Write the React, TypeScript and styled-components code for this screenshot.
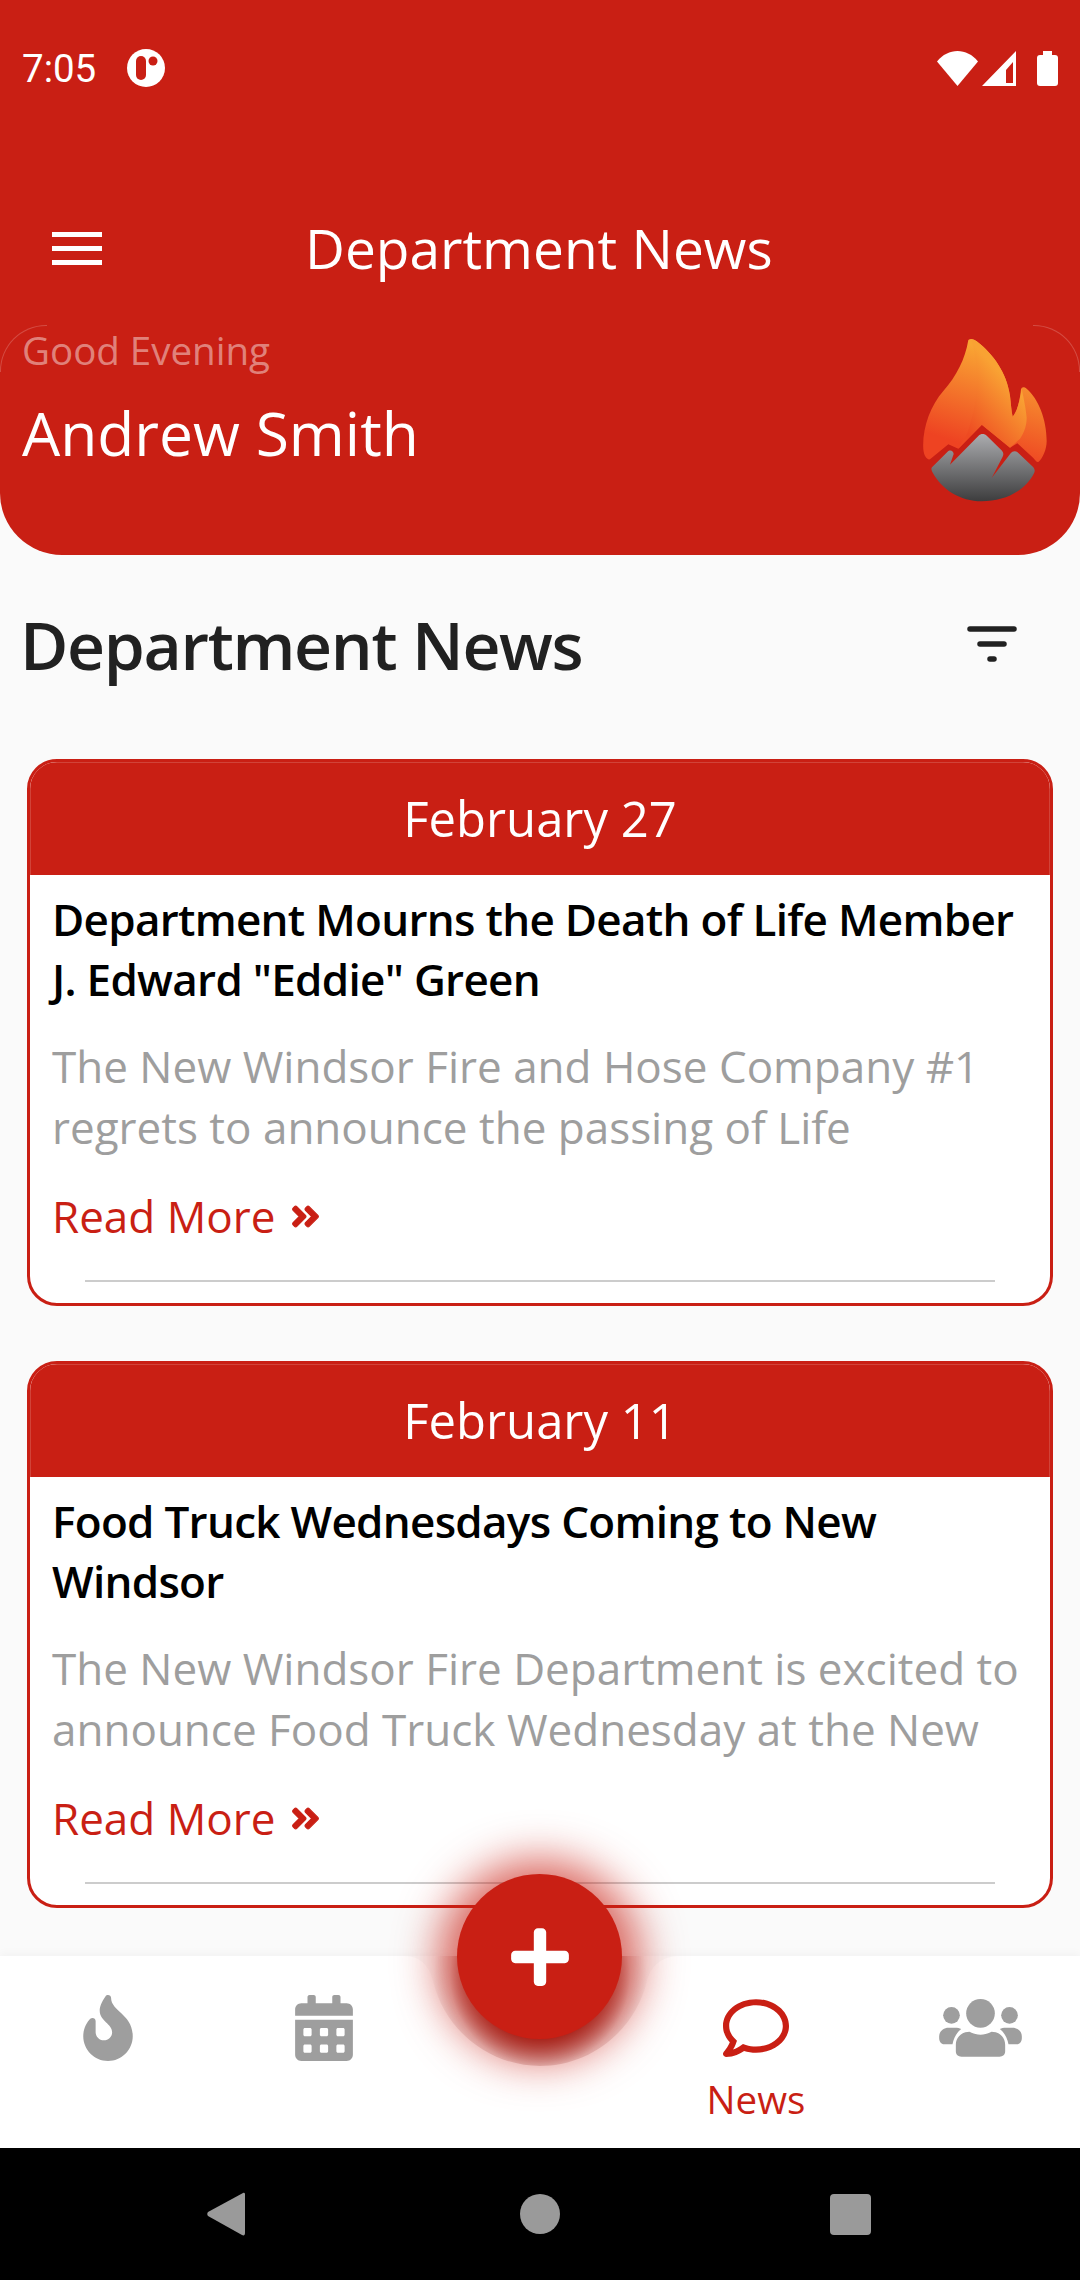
import type { FC } from 'react'
import styled, { createGlobalStyle } from 'styled-components'
import { FaAngleDoubleRight, FaCalendarAlt, FaFire, FaPlus, FaRegComment } from 'react-icons/fa'

const RED = '#c91f14'

const news = [
	{
		date: 'February 27',
		title: 'Department Mourns the Death of Life Member J. Edward "Eddie" Green',
		text: 'The New Windsor Fire and Hose Company #1 regrets to announce the passing of Life',
	},
	{
		date: 'February 11',
		title: 'Food Truck Wednesdays Coming to New Windsor',
		text: 'The New Windsor Fire Department is excited to announce Food Truck Wednesday at the New',
	},
]

const StatusIcons: FC = () => (
	<StatusRight>
		<svg width="41" height="35" viewBox="0 0 41 35">
			<path d="M0 10.5 C11 -3.500 30 -3.500 41 10.500 L20.500 35 Z" fill="#fff" />
		</svg>
		<svg width="35" height="35" viewBox="0 0 35 35">
			<path fillRule="evenodd" d="M34 0 V35 H0 Z M31 11 L24 19 V32 H31 Z" fill="#fff" />
		</svg>
		<Battery />
	</StatusRight>
)

const FireLogo: FC = () => (
	<svg width="130" height="170" viewBox="210 80 390 510">
		<defs>
			<linearGradient id="flameA" x1="0.55" y1="0.1" x2="0.3" y2="0.85">
				<stop offset="0" stopColor="#f9a533" />
				<stop offset="1" stopColor="#ee4322" />
			</linearGradient>
			<linearGradient id="flameB" x1="0.6" y1="0.3" x2="0.2" y2="0.9">
				<stop offset="0" stopColor="#f9a233" />
				<stop offset="1" stopColor="#ee4a22" />
			</linearGradient>
			<linearGradient id="rock" x1="0" y1="0" x2="0" y2="1">
				<stop offset="0" stopColor="#abacaf" />
				<stop offset="1" stopColor="#3d3d3e" />
			</linearGradient>
		</defs>
		<path
			d="M355 92 C362 86 372 90 380 96 C430 135 470 190 480 260 C483 285 484 305 488 322 C503 305 510 270 513 240 C515 232 522 232 530 238 C565 268 590 330 590 395 C590 420 578 448 565 458 C560 460 556 452 550 446 L502 402 L480 415 L396 346 L325 418 L295 405 L240 450 C230 452 222 440 220 420 C216 360 240 290 280 245 C320 200 345 150 355 92 Z"
			fill="url(#flameA)"
		/>
		<path
			d="M362 90 C375 120 382 170 380 230 C378 290 365 330 352 372 L325 418 L395 346 L480 415 L510 388 C525 365 530 345 530 325 C528 300 520 260 515 238 C510 270 503 305 488 322 C484 305 483 285 480 260 C470 190 430 135 380 96 C374 92 368 89 362 90 Z"
			fill="url(#flameB)"
		/>
		<path
			d="M246 474 L292 428 C300 420 310 424 311 434 L300 466 L385 380 C393 372 403 372 411 380 L456 424 C461 430 461 436 458 442 L425 506 L482 432 C488 424 498 424 505 431 L550 474 C555 480 555 486 552 492 C525 545 465 576 395 576 C330 576 275 540 247 488 C244 482 243 478 246 474 Z"
			fill="url(#rock)"
		/>
	</svg>
)

const FilterIcon: FC = () => (
	<svg width="50" height="36" viewBox="0 0 50 36">
		<g stroke="#212121" strokeWidth="5.500" strokeLinecap="round">
			<line x1="3" y1="3" x2="47" y2="3" />
			<line x1="13" y1="18" x2="37" y2="18" />
			<line x1="23" y1="33" x2="27" y2="33" />
		</g>
	</svg>
)

const UsersIcon: FC = () => (
	<UsersSvg width="83" height="58" viewBox="777 88 248 174">
		<g fill="currentColor">
			<circle cx="901" cy="131" r="43" />
			<circle cx="814" cy="137" r="25" />
			<circle cx="988" cy="137" r="25" />
			<path d="M827 245 V225 C827 200 848 186 868 186 C880 192 890 195 901 195 C912 195 922 192 934 186 C955 186 975 200 975 225 V245 C975 255 968 261 958 261 H844 C834 261 827 255 827 245 Z" />
			<path d="M777 205 V200 C777 185 790 174 805 174 H825 C832 174 838 175 843 178 C830 188 820 205 817 224 H792 C783 224 777 216 777 205 Z" />
			<path d="M1025 205 V200 C1025 185 1012 174 997 174 H977 C970 174 964 175 959 178 C972 188 982 205 985 224 H1010 C1019 224 1025 216 1025 205 Z" />
		</g>
	</UsersSvg>
)

const App: FC = () => {
	return (
		<Page>
			<GlobalStyle />
			<Header>
				<StatusBar>
					<Clock>7:05</Clock>
					<svg width="38" height="38" viewBox="0 0 38 38">
						<circle cx="19" cy="19" r="19" fill="#fff" />
						<rect x="9" y="7" width="10" height="24" rx="5" fill={RED} />
						<circle cx="26" cy="12" r="4.500" fill={RED} />
					</svg>
					<StatusIcons />
				</StatusBar>
				<Toolbar>
					<Burger>
						<span />
						<span />
						<span />
					</Burger>
					<ToolbarTitle>Department News</ToolbarTitle>
				</Toolbar>
				<Greeting>
					<div>
						<Hello>Good Evening</Hello>
						<UserName>Andrew Smith</UserName>
					</div>
					<LogoSlot>
						<FireLogo />
					</LogoSlot>
				</Greeting>
			</Header>
			<Content>
				<SectionRow>
					<SectionTitle>Department News</SectionTitle>
					<FilterIcon />
				</SectionRow>
				{news.map((item) => (
					<Card key={item.date}>
						<CardDate>{item.date}</CardDate>
						<CardBody>
							<CardTitle>{item.title}</CardTitle>
							<CardText>{item.text}</CardText>
							<ReadMore>
								Read More <MoreIcon size={33} />
							</ReadMore>
						</CardBody>
						<CardRule />
					</Card>
				))}
			</Content>
			<BottomNav>
				<Notch width="300" height="120" viewBox="0 0 300 120">
					<defs>
						<radialGradient id="notchShade" gradientUnits="userSpaceOnUse" cx="150" cy="20" r="110">
							<stop offset="0.57" stopColor="#7f302c" />
							<stop offset="0.82" stopColor="#e6d6d5" />
							<stop offset="0.97" stopColor="#fafafa" />
						</radialGradient>
					</defs>
					<path
						d="M0 0 H14 C32 0 40 12 43 25 C55 75 100 110 150 110 C200 110 245 75 257 25 C260 12 270 0 290 0 H300 V-2 H0 Z"
						fill="url(#notchShade)"
					/>
				</Notch>
				<Fab>
					<FaPlus size={66} color="#fff" />
				</Fab>
				<NavItem>
					<FaFire size={66} />
				</NavItem>
				<NavItem>
					<FaCalendarAlt size={66} />
				</NavItem>
				<span />
				<NavItem $active>
					<FaRegComment size={66} />
					<NavLabel>News</NavLabel>
				</NavItem>
				<NavItem $shift={16}>
					<UsersIcon />
				</NavItem>
			</BottomNav>
			<AndroidBar>
				<svg width="38" height="44" viewBox="0 0 38 44">
					<path d="M36 1 C38 0 38 2 38 3 V41 C38 43 37 44 35 43 L1 24 C0 23 0 21 1 20 Z" fill="#9a9a9a" />
				</svg>
				<HomeDot />
				<RecentSquare />
			</AndroidBar>
		</Page>
	)
}

const GlobalStyle = createGlobalStyle`
	html, body {
		margin: 0;
		padding: 0;
		background: #fafafa;
	}
	* {
		box-sizing: border-box;
	}
`

const Page = styled.div`
	width: 1080px;
	height: 2280px;
	display: flex;
	flex-direction: column;
	overflow: hidden;
	background: #fafafa;
	font-family: 'Open Sans', 'Liberation Sans', sans-serif;
`

const Header = styled.header`
	height: 555px;
	flex: none;
	background: ${RED};
	border-radius: 0 0 62px 62px;
	color: #fff;
`

const StatusBar = styled.div`
	height: 134px;
	padding: 2px 22px 0 22px;
	display: flex;
	align-items: center;
	gap: 31px;
`

const Clock = styled.span`
	font-family: Roboto, sans-serif;
	font-size: 38.500px;
`

const StatusRight = styled.div`
	margin-left: auto;
	display: flex;
	align-items: center;
	gap: 4px;
`

const Battery = styled.div`
	position: relative;
	width: 21px;
	height: 31px;
	margin: 4px 0 0 16px;
	background: #fff;
	border-radius: 3px;

	&::before {
		content: '';
		position: absolute;
		top: -4px;
		left: 6px;
		width: 9px;
		height: 4px;
		background: #fff;
	}
`

const Toolbar = styled.div`
	height: 191px;
	padding: 37px 0 0 52px;
	display: flex;
	align-items: center;
`

const Burger = styled.div`
	width: 50px;
	display: flex;
	flex-direction: column;
	gap: 9px;

	span {
		display: block;
		height: 5px;
		background: #fff;
	}
`

const ToolbarTitle = styled.h1`
	margin: 0 0 0 203px;
	font-size: 55px;
	font-weight: 400;
	line-height: 68px;
`

const Greeting = styled.section`
	position: relative;
	height: 230px;
	padding: 0 22px;
	display: flex;
	justify-content: space-between;

	&::before,
	&::after {
		content: '';
		position: absolute;
		top: 0;
		width: 46px;
		height: 46px;
		border-top: 1px solid rgba(255, 255, 255, 0.2);
	}

	&::before {
		left: 0;
		border-left: 1px solid rgba(255, 255, 255, 0.2);
		border-top-left-radius: 46px;
	}

	&::after {
		right: 0;
		border-right: 1px solid rgba(255, 255, 255, 0.2);
		border-top-right-radius: 46px;
	}
`

const Hello = styled.div`
	font-size: 38.500px;
	line-height: 50px;
	color: rgba(255, 255, 255, 0.45);
`

const UserName = styled.div`
	margin-top: 17px;
	font-size: 60.500px;
	line-height: 82px;
`

const LogoSlot = styled.div`
	margin: 11px 8px 0 0;
`

const Content = styled.main`
	flex: 1;
	padding: 0 27px;
	display: flex;
	flex-direction: column;
	gap: 55px;
`

const SectionRow = styled.div`
	height: 149px;
	margin: 0 -7px -55px;
	padding: 28px 43px 0 0;
	display: flex;
	align-items: center;
	justify-content: space-between;
`

const SectionTitle = styled.h2`
	margin: 0;
	font-size: 66px;
	font-weight: 600;
	letter-spacing: -0.02em;
	color: #212121;
`

const Card = styled.article`
	height: 547px;
	margin-top: 55px;
	border: 3px solid ${RED};
	border-radius: 30px;
	background: #fff;
	overflow: hidden;

	& + & {
		margin-top: 0;
	}
`

const CardDate = styled.div`
	height: 113px;
	padding-bottom: 2px;
	display: flex;
	align-items: center;
	justify-content: center;
	border: solid rgba(255, 255, 255, 0.16);
	border-width: 1px 1px 0;
	background: ${RED};
	color: #fff;
	font-size: 49px;
`

const CardBody = styled.div`
	height: 405px;
	padding: 14px 20px 0 22px;
`

const CardTitle = styled.h3`
	margin: 0;
	font-size: 44px;
	font-weight: 600;
	letter-spacing: -0.016em;
	line-height: 60px;
	color: #000;
`

const CardText = styled.p`
	margin: 27px 0 0;
	font-size: 44px;
	line-height: 61px;
	color: #9e9e9e;
`

const ReadMore = styled.div`
	margin-top: 28px;
	display: flex;
	align-items: center;
	gap: 14px;
	font-size: 44px;
	line-height: 60px;
	color: ${RED};
`

const MoreIcon = styled(FaAngleDoubleRight)`
	stroke: currentColor;
	stroke-width: 18px;
`

const CardRule = styled.div`
	margin: 0 55px;
	height: 2px;
	background: #ccc;
`

const BottomNav = styled.nav`
	position: relative;
	height: 192px;
	flex: none;
	padding-top: 39px;
	display: grid;
	grid-template-columns: repeat(5, 216px);
	background: #fff;
	box-shadow: 0 -3px 8px rgba(0, 0, 0, 0.03);
`

const Notch = styled.svg`
	position: absolute;
	top: 0;
	left: 390px;
`

const Fab = styled.button`
	position: absolute;
	top: -82px;
	left: 457px;
	width: 165px;
	height: 165px;
	padding: 0;
	border: 0;
	border-radius: 50%;
	display: flex;
	align-items: center;
	justify-content: center;
	background: ${RED};
	box-shadow: 0 4px 44px 18px rgba(201, 31, 20, 0.7);
`

const NavItem = styled.div<{ $active?: boolean; $shift?: number }>`
	display: flex;
	flex-direction: column;
	align-items: center;
	padding-left: ${(p) => p.$shift ?? 0}px;
	color: ${(p) => (p.$active ? RED : '#9e9e9e')};
`

const UsersSvg = styled.svg`
	margin-top: 4px;
`

const NavLabel = styled.span`
	margin-top: 13px;
	font-size: 38.500px;
	line-height: 50px;
`

const AndroidBar = styled.div`
	height: 132px;
	flex: none;
	padding-left: 207px;
	display: flex;
	align-items: center;
	background: #000;
`

const HomeDot = styled.div`
	width: 40px;
	height: 40px;
	margin: 0 270px 0 275px;
	border-radius: 50%;
	background: #9a9a9a;
`

const RecentSquare = styled.div`
	width: 41px;
	height: 41px;
	border-radius: 4px;
	background: #9a9a9a;
`

export default App
